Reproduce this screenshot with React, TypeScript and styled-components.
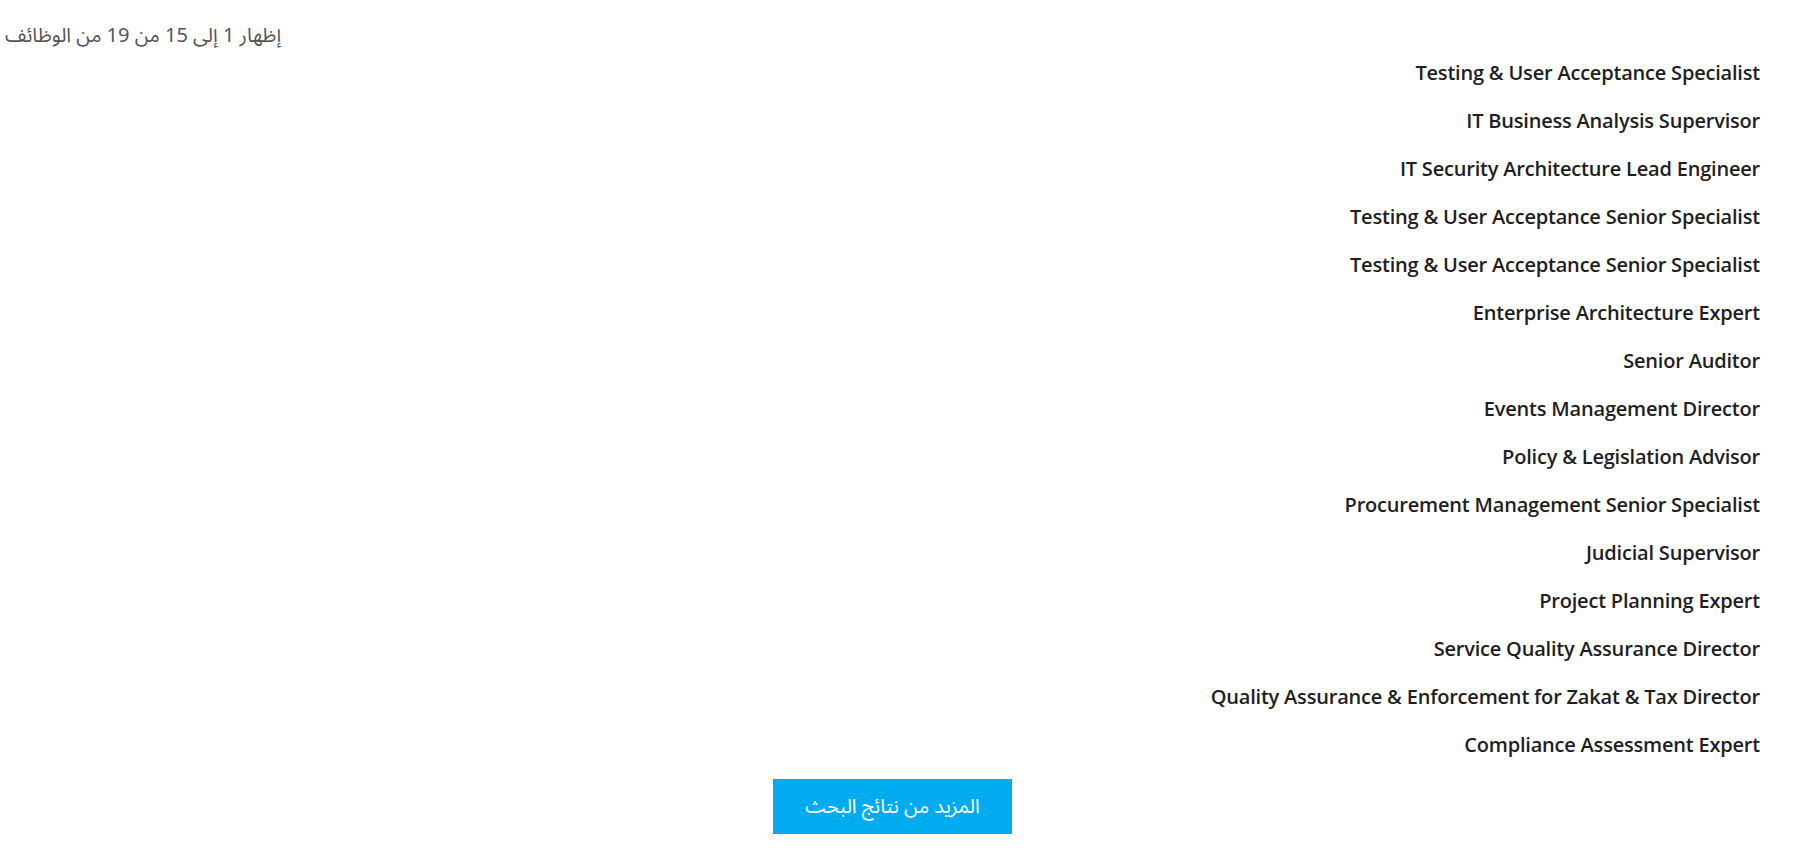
import React from 'react';
import styled, { createGlobalStyle } from 'styled-components';

const GlobalStyle = createGlobalStyle`
  body {
    margin: 0;
    background: #ffffff;
    font-family: "Open Sans", "DejaVu Sans", sans-serif;
  }
`;

const jobs = [
  'Testing & User Acceptance Specialist',
  'IT Business Analysis Supervisor',
  'IT Security Architecture Lead Engineer',
  'Testing & User Acceptance Senior Specialist',
  'Testing & User Acceptance Senior Specialist',
  'Enterprise Architecture Expert',
  'Senior Auditor',
  'Events Management Director',
  'Policy & Legislation Advisor',
  'Procurement Management Senior Specialist',
  'Judicial Supervisor',
  'Project Planning Expert',
  'Service Quality Assurance Director',
  'Quality Assurance & Enforcement for Zakat & Tax Director',
  'Compliance Assessment Expert',
];

const App: React.FC = () => {
  return (
    <>
      <GlobalStyle />
      <Container>
        <ResultsCount>إظهار 1 إلى 15 من 19 من الوظائف</ResultsCount>
        <JobList>
          {jobs.map((job, index) => (
            <JobItem key={index}>
              <JobLink href="#">{job}</JobLink>
            </JobItem>
          ))}
        </JobList>
        <Footer>
          <MoreButton type="button">المزيد من نتائج البحث</MoreButton>
        </Footer>
      </Container>
    </>
  );
};

const Container = styled.div`
  display: flex;
  flex-direction: column;
  padding: 24px 31px 0 5px;
`;

const ResultsCount = styled.div`
  direction: rtl;
  align-self: flex-start;
  font-family: "Noto Sans Arabic", "DejaVu Sans", sans-serif;
  font-size: 20px;
  line-height: 24px;
  color: #555555;
`;

const JobList = styled.ul`
  list-style: none;
  margin: 0;
  padding: 0 20px 0 0;
  display: flex;
  flex-direction: column;
  align-items: flex-end;
`;

const JobItem = styled.li`
  height: 48px;
  display: flex;
  align-items: center;
`;

const JobLink = styled.a`
  font-family: "Open Sans", sans-serif;
  font-size: 20px;
  font-weight: 600;
  color: #1e1e24;
  text-decoration: none;
  letter-spacing: -0.2px;
`;

const Footer = styled.div`
  display: flex;
  justify-content: center;
  margin-top: 11px;
`;

const MoreButton = styled.button`
  direction: rtl;
  width: 239px;
  height: 55px;
  border: none;
  background: #00abef;
  color: #ffffff;
  font-family: "Noto Sans Arabic", "DejaVu Sans", sans-serif;
  font-size: 20px;
  cursor: pointer;
`;

export default App;
